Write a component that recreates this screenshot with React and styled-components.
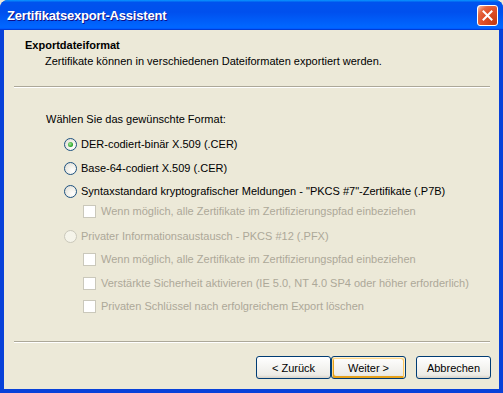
import React from "react";
import styled, { createGlobalStyle, css } from "styled-components";

const Global = createGlobalStyle`
  html, body { margin: 0; padding: 0; background: #ECE9D8; }
  body { font-family: "Liberation Sans", Arial, sans-serif; font-size: 11px; }
`;

const Window = styled.div`
  width: 503px;
  height: 393px;
  display: flex;
  flex-direction: column;
  background: #0841d9;
  border-radius: 8px 8px 0 0;
  overflow: hidden;
`;

const TitleBar = styled.div`
  height: 30px;
  flex: none;
  display: flex;
  align-items: center;
  justify-content: space-between;
  padding: 0 5px 0 7px;
  box-sizing: border-box;
  background: linear-gradient(180deg, #0997ff, #0053ee 8%, #0050ee 40%, #06f 88%, #06f 93%, #005bff 95%, #003dd7 96%, #003dd7);
`;

const Title = styled.div`
  color: #fff;
  font-family: "Liberation Sans", Arial, sans-serif;
  font-weight: bold;
  font-size: 13px;
  letter-spacing: -0.2px;
  text-shadow: 1px 1px #0f1089;
  padding-top: 1px;
`;

const CloseButton = styled.div`
  width: 21px;
  height: 21px;
  box-sizing: border-box;
  border: 1px solid #fff;
  border-radius: 3px;
  background: radial-gradient(circle at 90% 90%, #c43a10 0%, #e0502a 55%, #e4673f 75%, #f6a88c 92%, #fff 100%);
  display: flex;
  align-items: center;
  justify-content: center;
  margin-top: 1px;
`;

const Frame = styled.div`
  flex: 1;
  display: flex;
  flex-direction: column;
  margin: 0 4px 4px 4px;
  background: #ECE9D8;
`;

const Header = styled.div`
  height: 56px;
  box-sizing: border-box;
  padding: 9px 0 0 21px;
  display: flex;
  flex-direction: column;
  gap: 3px;
`;

const HeaderTitle = styled.div`
  font-weight: bold;
  font-size: 11px;
  line-height: 13px;
  color: #000;
`;

const HeaderSub = styled.div`
  font-size: 11px;
  line-height: 13px;
  color: #000;
  padding-left: 20px;
`;

const Separator = styled.div`
  height: 1px;
  margin: 0 9px 0 10px;
  background: #aca899;
  border-bottom: 1px solid #fff;
`;

const Body = styled.div`
  flex: 1;
  display: flex;
  flex-direction: column;
  padding: 25px 0 0 42px;
`;

const Prompt = styled.div`
  line-height: 13px;
  color: #000;
  margin-bottom: 12px;
`;

const Option = styled.label`
  display: flex;
  align-items: center;
  gap: 4px;
  height: 13px;
  margin-top: ${(p) => p.$top}px;
  margin-left: ${(p) => (p.$indent ? 37 : 18)}px;
  line-height: 13px;
  color: ${(p) => (p.$disabled ? "#aca899" : "#000")};
  white-space: nowrap;
`;

const Radio = styled.span`
  width: 13px;
  height: 13px;
  box-sizing: border-box;
  border-radius: 50%;
  flex: none;
  display: flex;
  align-items: center;
  justify-content: center;
  ${(p) =>
    p.$disabled
      ? css`
          border: 1px solid #cac8bb;
          background: #f5f4ea;
        `
      : css`
          border: 1px solid #1c5180;
          background: radial-gradient(circle at 70% 70%, #fff 0%, #f3f2ec 40%, #dcdad2 100%);
        `}
  &::after {
    content: "";
    display: ${(p) => (p.$checked ? "block" : "none")};
    width: 5px;
    height: 5px;
    border-radius: 50%;
    background: radial-gradient(circle at 40% 40%, #a7e69c, #21a121 70%);
  }
`;

const Check = styled.span`
  width: 13px;
  height: 13px;
  box-sizing: border-box;
  flex: none;
  border: 1px solid #cac8bb;
  background: #fff;
  margin-right: 1px;
`;

const Footer = styled.div`
  height: 46px;
  display: flex;
  justify-content: flex-end;
  align-items: flex-start;
  padding: 13px 8px 0 0;
  box-sizing: border-box;
`;

const Button = styled.button`
  width: 75px;
  height: 23px;
  box-sizing: border-box;
  font-family: "Liberation Sans", Arial, sans-serif;
  font-size: 11px;
  color: #000;
  border: 1px solid #003c74;
  border-radius: 3px;
  background: linear-gradient(180deg, #fff, #ecebe6 86%, #d6d0c5);
  margin-left: ${(p) => p.$gap || 0}px;
  padding: 0;
  ${(p) =>
    p.$hot &&
    css`
      box-shadow: inset -1px 1px #fff0cf, inset 1px 2px #fdd889, inset -2px 2px #fbc761, inset 2px -2px #e5a01a;
    `}
`;

export default function App() {
  return (
    <>
      <Global />
      <Window>
        <TitleBar>
          <Title>Zertifikatsexport-Assistent</Title>
          <CloseButton>
            <svg width="11" height="11" viewBox="0 0 11 11">
              <path d="M1.5 1.5 L9.5 9.5 M9.5 1.5 L1.5 9.5" stroke="#fff" strokeWidth="2" strokeLinecap="square" />
            </svg>
          </CloseButton>
        </TitleBar>
        <Frame>
          <Header>
            <HeaderTitle>Exportdateiformat</HeaderTitle>
            <HeaderSub>Zertifikate können in verschiedenen Dateiformaten exportiert werden.</HeaderSub>
          </Header>
          <Separator />
          <Body>
            <Prompt>Wählen Sie das gewünschte Format:</Prompt>
            <Option $top={0}>
              <Radio $checked />
              DER-codiert-binär X.509 (.CER)
            </Option>
            <Option $top={11}>
              <Radio />
              Base-64-codiert X.509 (.CER)
            </Option>
            <Option $top={10}>
              <Radio />
              Syntaxstandard kryptografischer Meldungen - "PKCS #7"-Zertifikate (.P7B)
            </Option>
            <Option $top={7} $indent $disabled>
              <Check />
              Wenn möglich, alle Zertifikate im Zertifizierungspfad einbeziehen
            </Option>
            <Option $top={12} $disabled>
              <Radio $disabled />
              Privater Informationsaustausch - PKCS #12 (.PFX)
            </Option>
            <Option $top={10} $indent $disabled>
              <Check />
              Wenn möglich, alle Zertifikate im Zertifizierungspfad einbeziehen
            </Option>
            <Option $top={11} $indent $disabled>
              <Check />
              Verstärkte Sicherheit aktivieren (IE 5.0, NT 4.0 SP4 oder höher erforderlich)
            </Option>
            <Option $top={10} $indent $disabled>
              <Check />
              Privaten Schlüssel nach erfolgreichem Export löschen
            </Option>
          </Body>
          <Separator />
          <Footer>
            <Button>&lt; Zurück</Button>
            <Button $hot>Weiter &gt;</Button>
            <Button $gap={10}>Abbrechen</Button>
          </Footer>
        </Frame>
      </Window>
    </>
  );
}
